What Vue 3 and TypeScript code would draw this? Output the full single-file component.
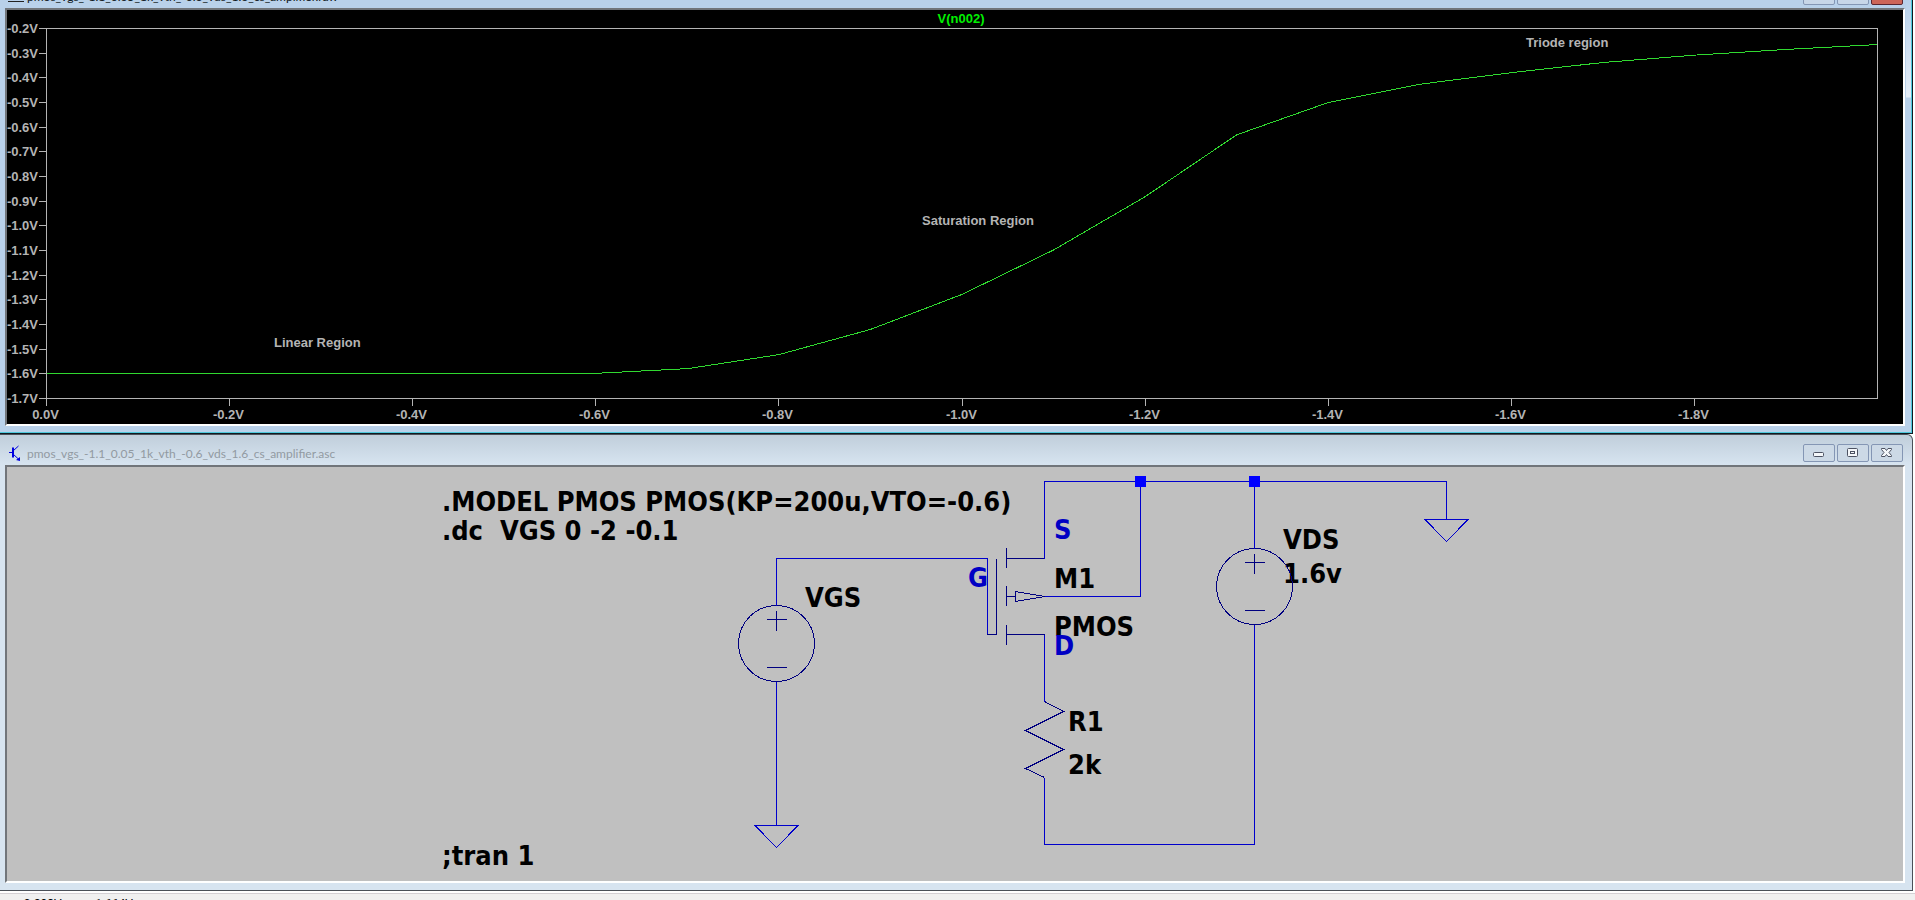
<script setup lang="ts">
interface Label {
  text: string
  x: number
  y: number
}

const plot = { left: 46.5, right: 1877.5, top: 28.5, bottom: 398.5 }

const xOf = (volts: number): number =>
  plot.left + ((plot.right - plot.left) * -volts) / 2
const yOf = (volts: number): number =>
  plot.top + ((plot.bottom - plot.top) * (-0.2 - volts)) / 1.5

const snap = (value: number): number => Math.floor(value) + 0.5

const yTicks = Array.from({ length: 16 }, (_, i) => {
  const volts = -(i + 2) / 10
  return { label: `${volts.toFixed(1)}V`, y: snap(yOf(volts)) }
})

const xTicks = Array.from({ length: 10 }, (_, i) => {
  const volts = -i / 5
  return { label: i === 0 ? '0.0V' : `${volts.toFixed(1)}V`, x: snap(xOf(volts)) }
})

// Sweep output, one sample per 0.1 V of VGS
const samples: number[] = [
  -1.6, -1.6, -1.6, -1.6, -1.6, -1.6, -1.598, -1.579, -1.522, -1.42, -1.278,
  -1.098, -0.882, -0.631, -0.5, -0.426, -0.379, -0.338, -0.308, -0.285, -0.265,
]
const trace = samples.map((v, i) => `${xOf(-i / 10)},${yOf(v)}`).join(' ')

const regions: Label[] = [
  { text: 'Linear Region', x: 274, y: 347 },
  { text: 'Saturation Region', x: 922, y: 225 },
  { text: 'Triode region', x: 1526, y: 47 },
]

const labels: Label[] = [
  { text: '.MODEL PMOS PMOS(KP=200u,VTO=-0.6)', x: 442, y: 511 },
  { text: '.dc\u00a0 VGS 0 -2 -0.1', x: 442, y: 540 },
  { text: ';tran 1', x: 442, y: 865 },
  { text: 'VGS', x: 805, y: 607 },
  { text: 'M1', x: 1054, y: 588 },
  { text: 'PMOS', x: 1054, y: 636 },
  { text: 'VDS', x: 1283, y: 549 },
  { text: '1.6v', x: 1283, y: 583 },
  { text: 'R1', x: 1068, y: 731 },
  { text: '2k', x: 1068, y: 774 },
]

const pins: Label[] = [
  { text: 'S', x: 1054, y: 539 },
  { text: 'G', x: 968, y: 587 },
  { text: 'D', x: 1054, y: 655 },
]

const sources = [
  { x: 776.5, y: 643.5 },
  { x: 1254.5, y: 586.5 },
]

const baseName = 'pmos_vgs_-1.1_0.05_1k_vth_-0.6_vds_1.6_cs_amplifier'
</script>

<template>
  <main class="desktop">
    <section class="window active">
      <div class="clip">
        <header class="titlebar">
          <svg class="app-icon" viewBox="0 0 16 16" aria-hidden="true">
            <path d="M0 1h16v11H0z" fill="#e8eef6" />
            <path d="M0 13.500h16" stroke="#222" stroke-width="1" />
            <path d="M0 12l3-5 3 5 3-5 3 5 2-3" fill="none" stroke="#222" />
          </svg>
          <h1 class="title">{{ baseName }}.raw</h1>
          <div class="controls">
            <button type="button" aria-label="Minimize"></button>
            <button type="button" aria-label="Maximize"></button>
            <button type="button" class="close" aria-label="Close"></button>
          </div>
        </header>
      </div>
      <div class="pane plot">
        <svg class="drawing" viewBox="7 10 1896 414" role="img" aria-label="V(n002) sweep">
          <text class="trace-name" x="961" y="23" text-anchor="middle">V(n002)</text>
          <rect
            class="axis"
            :x="plot.left"
            :y="plot.top"
            :width="plot.right - plot.left"
            :height="plot.bottom - plot.top"
          />
          <g v-for="t in yTicks" :key="t.label">
            <path class="axis" :d="`M39 ${t.y}H46`" />
            <text class="tick" x="38" :y="t.y + 4.5" text-anchor="end">{{ t.label }}</text>
          </g>
          <g v-for="t in xTicks" :key="t.label">
            <path class="axis" :d="`M${t.x} 399V406`" />
            <text class="tick" :x="t.x - 1" y="419" text-anchor="middle">{{ t.label }}</text>
          </g>
          <polyline class="trace" :points="trace" />
          <text v-for="r in regions" :key="r.text" class="region" :x="r.x" :y="r.y">{{ r.text }}</text>
        </svg>
      </div>
    </section>

    <section class="window inactive">
      <header class="titlebar">
        <svg class="app-icon" viewBox="0 0 16 16" aria-hidden="true">
          <path d="M1 7.500h4M10.500 1L5.500 5.500M5.500 9.500L11 14.500" fill="none" stroke="#0000e0" />
          <path d="M5 2.500v10" fill="none" stroke="#0000e0" stroke-width="2" />
          <path d="M12 16v-4l-4 3z" fill="#0000e0" />
        </svg>
        <h2 class="title">{{ baseName }}.asc</h2>
        <div class="controls">
          <button type="button" aria-label="Minimize">
            <svg viewBox="0 0 32 18"><rect x="10.500" y="8.500" width="10" height="4" rx="1" /></svg>
          </button>
          <button type="button" aria-label="Maximize">
            <svg viewBox="0 0 32 18">
              <rect x="10.500" y="4.500" width="10" height="8" rx="1" />
              <rect x="13.500" y="7.500" width="4" height="2" />
            </svg>
          </button>
          <button type="button" aria-label="Close">
            <svg viewBox="0 0 32 18">
              <path d="M10.500 4.500h3.500l1.500 2 1.500-2h3.500v1l-2.500 3 2.500 3v1h-3.500l-1.500-2-1.500 2h-3.500v-1l2.500-3-2.500-3z" />
            </svg>
          </button>
        </div>
      </header>
      <div class="pane schematic">
        <svg class="drawing" viewBox="7 467 1896 414" role="img" aria-label="PMOS common source amplifier">
          <text v-for="l in labels" :key="l.text" class="label" :x="l.x" :y="l.y">{{ l.text }}</text>
          <text v-for="p in pins" :key="p.text" class="label pin" :x="p.x" :y="p.y">{{ p.text }}</text>

          <g class="symbol">
            <g v-for="s in sources" :key="s.x">
              <circle :cx="s.x" :cy="s.y" r="38" />
              <path :d="`M${s.x - 10} ${s.y - 24}h20M${s.x} ${s.y - 33}v20M${s.x - 10} ${s.y + 24}h20`" />
            </g>
            <path d="M987.500 558.500V634.500H996.500V558.500" />
            <path d="M1006.500 548V568M1006.500 586V606M1006.500 625V645" />
            <path d="M1006.500 558.500H1044.500M1006.500 634.500H1044.500M1006.500 596.500H1015.500" />
            <path d="M1015.500 591.500V601.500L1044.500 596.500Z" />
            <path d="M1044.500 701.500L1063.500 711.500L1025.500 730.500L1063.500 749.500L1025.500 768.500L1044.500 777.500" />
          </g>

          <g class="wire">
            <path d="M776.500 605.500V558.500H987.500V634" />
            <path d="M776.500 681.500V825.500" />
            <path d="M755 825.500H798L776.500 847.500Z" />
            <path d="M1044.500 558.500V481.500H1446.500V519.500" />
            <path d="M1425 519.500H1468L1446.500 541.500Z" />
            <path d="M1044.500 596.500H1140.500V481.500" />
            <path d="M1254.500 481.500V548.500" />
            <path d="M1044.500 634.500V701.500" />
            <path d="M1254.500 624.500V844.500H1044.500V777.500" />
          </g>
          <rect class="node" x="1135" y="476" width="11" height="11" />
          <rect class="node" x="1249" y="476" width="11" height="11" />
        </svg>
      </div>
    </section>

    <footer class="status">
      <span>x = -0.293V</span>
      <span>y = -1.664V</span>
    </footer>
  </main>
</template>

<style>
body {
  margin: 0;
  background: #fff;
}
</style>

<style scoped>
.desktop {
  display: flex;
  flex-direction: column;
  height: 100vh;
  overflow: hidden;
  background: #fff;
  font-family: Lato, "Open Sans", sans-serif;
}

.window {
  flex: none;
  margin-right: 2px;
  padding: 0 7px 7px 5px;
  border-right: 1px solid #101820;
  border-bottom: 1px solid #101820;
}

.active {
  background:
    linear-gradient(#b9d1ea 0, #e6eef8 97px, #b9d1ea 98px) right 1px top / 5px 100% no-repeat,
    #b9d1ea;
  box-shadow: inset -1px -1px #4cc8dc;
}

.inactive {
  border-top: 1px solid #6b7683;
  border-color: #4a5058;
  border-top-right-radius: 6px;
  background: linear-gradient(#c0cedb, #d7e4f0 30px);
}

.clip {
  display: flex;
  align-items: flex-end;
  height: 8px;
  overflow: hidden;
}

.titlebar {
  display: flex;
  flex: auto;
  align-items: center;
  gap: 3px;
  box-sizing: border-box;
  height: 30px;
  padding: 6px 0 0 3px;
}

.app-icon {
  width: 16px;
  height: 16px;
}

.title {
  flex: auto;
  margin: 2px 0 0;
  font-size: 12px;
  font-weight: 400;
  line-height: 16px;
  white-space: nowrap;
  color: #101820;
}

.inactive .title {
  color: #929aa2;
}

.controls {
  display: flex;
  gap: 2px;
  margin-right: 2px;
}

button {
  display: flex;
  box-sizing: border-box;
  width: 32px;
  height: 18px;
  padding: 0;
  border: 1px solid #8496b4;
  border-radius: 2px;
  background: #c7d6e8;
}

button svg {
  flex: none;
  width: 32px;
  height: 18px;
  margin: -1px;
  fill: #f4f7fa;
  stroke: #4c5262;
}

.inactive button {
  background: #ccd9e6;
}

.active .close {
  border-color: #5a2630;
  background: #cc6558;
}

.pane {
  border: 2px solid #fff;
  border-top-color: #71757a;
  border-left-color: #71757a;
}

.plot {
  background: #000;
}

.schematic {
  background: #c0c0c0;
}

.drawing {
  display: block;
  width: 100%;
  height: auto;
}

.drawing text {
  font-family: "Liberation Sans", Arial, sans-serif;
  font-size: 13px;
  font-weight: 700;
  fill: #b4b4b4;
}

.drawing .trace-name {
  fill: #00f000;
}

.axis {
  fill: none;
  stroke: #b4b4b4;
  shape-rendering: crispEdges;
}

.trace {
  fill: none;
  stroke: #30d830;
  shape-rendering: crispEdges;
}

.drawing .label {
  font-family: "DejaVu Sans Condensed", "Noto Sans", sans-serif;
  font-size: 27px;
  fill: #000;
}

.drawing .pin {
  fill: #0000c4;
}

.symbol,
.wire {
  fill: none;
  stroke: #000080;
  shape-rendering: crispEdges;
}

.wire {
  stroke: #0000cc;
}

.node {
  fill: #0000ff;
}

.status {
  display: flex;
  flex: none;
  gap: 12px;
  margin-top: 2px;
  padding: 1px 2px 4px;
  border-top: 1px solid #d4d0d4;
  background: #f0f0f0;
  font-family: Roboto, "Open Sans", sans-serif;
  font-size: 12px;
  line-height: 18px;
  color: #000;
}
</style>
